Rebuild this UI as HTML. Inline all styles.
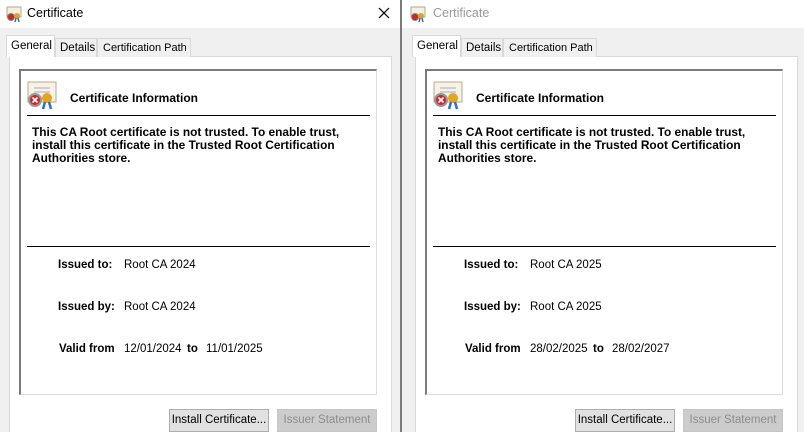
<!DOCTYPE html>
<html><head><meta charset="utf-8"><style>
*{margin:0;padding:0;box-sizing:border-box}
body{width:804px;height:432px;overflow:hidden;background:#f0f0f0;font-family:"Liberation Sans",sans-serif;font-size:11.5px;color:#000;position:relative}
.w{position:absolute;top:0;width:400px;height:432px;background:#f0f0f0;overflow:hidden}
.a{position:absolute;white-space:nowrap}
.tb{position:absolute;left:0;top:0;width:400px;height:28px;background:#fff}
.tab{position:absolute;top:38px;height:19px;border:1px solid #d9d9d9;border-bottom:none;background:#f0f0f0;padding:3px 4px 0;font-size:11.5px;white-space:nowrap;overflow:hidden}
.panel{position:absolute;left:9px;top:56px;width:383px;height:390px;background:#fff;border:1px solid #d9d9d9}
.box{position:absolute;left:19px;top:69px;width:358px;height:326px;background:#fff;border:1px solid #dcdcdc;border-top:2px solid #7a7a7a;border-left:2px solid #7a7a7a}
.hr{position:absolute;left:27px;width:343px;height:1px;background:#000}
.b{font-weight:bold}
.btn{position:absolute;top:409px;width:100px;height:23px;border:1px solid #adadad;background:#e1e1e1;text-align:center;line-height:21px;font-size:11.5px;white-space:nowrap}
.msg{left:32px;top:126px;line-height:13px;font-size:11.9px}
.cp{font-size:11px;padding-left:5px}
</style></head><body>

<div class="w" style="left:0">
 <div class="tb"></div>
 <svg class="a" style="left:6px;top:6px" width="16" height="16"><rect x="1" y="1" width="14" height="10" fill="#f4efe2" stroke="#b9a98a"/><circle cx="5" cy="11" r="3.5" fill="#c8272b" stroke="#888"/><circle cx="11" cy="10" r="3" fill="#e0a41a"/><path d="M10 12 l-1 4 M12 12 l1 4" stroke="#2f6fd0" stroke-width="1.5"/></svg>
 <div class="a" style="left:27px;top:6px;font-size:12.5px">Certificate</div>
 <svg class="a" style="left:378px;top:7px" width="12" height="12"><path d="M1 1L11 11M11 1L1 11" stroke="#000" stroke-width="1.2"/></svg>
 <div class="panel"></div>
 <div class="tab" style="left:6px;top:35px;height:22px;width:49px;background:#fff;padding-top:4px">General</div>
 <div class="tab" style="left:55px;width:42px">Details</div>
 <div class="tab cp" style="left:97px;width:94px">Certification Path</div>
 <div class="box"></div>
 <svg class="a" style="left:26px;top:80px" width="34" height="30"><rect x="2" y="2" width="28" height="20" fill="#f6f2e6" stroke="#b8ab8c"/><path d="M8 8h16M8 12h16" stroke="#aab" stroke-width="1"/><circle cx="9" cy="20" r="6" fill="#c9292d" stroke="#999" stroke-width="2"/><path d="M6.5 17.5l5 5M11.5 17.5l-5 5" stroke="#fff" stroke-width="1.6"/><circle cx="21" cy="18" r="5" fill="#e2a51b"/><path d="M19 22l-2 7M23 22l2 7" stroke="#2f6fd0" stroke-width="2.5"/></svg>
 <div class="a b" style="left:70px;top:91px;font-size:12px">Certificate Information</div>
 <div class="hr" style="top:115px"></div>
 <div class="a b msg">This CA Root certificate is not trusted. To enable trust,<br>install this certificate in the Trusted Root Certification<br>Authorities store.</div>
 <div class="hr" style="top:246px"></div>
 <div class="a b" style="left:58px;top:259px">Issued to:</div><div class="a" style="left:124px;top:259px">Root CA 2024</div>
 <div class="a b" style="left:58px;top:301px">Issued by:</div><div class="a" style="left:124px;top:301px">Root CA 2024</div>
 <div class="a b" style="left:59px;top:343px">Valid from</div><div class="a" style="left:124px;top:343px">12/01/2024</div><div class="a b" style="left:187px;top:343px">to</div><div class="a" style="left:206px;top:343px">11/01/2025</div>
 <div class="btn" style="left:169px">Install Certificate...</div>
 <div class="btn" style="left:277px;color:#8d8d8d;border-color:#c5c5c5;background:#cccccc">Issuer Statement</div>
</div>

<div class="a" style="left:400px;top:0;width:2px;height:432px;background:#7b7b7b"></div>

<div class="w" style="left:402px;width:402px">
 <div class="tb" style="left:-2px;width:404px"></div>
 <svg class="a" style="left:8px;top:6px" width="16" height="16"><rect x="1" y="1" width="14" height="10" fill="#f4efe2" stroke="#b9a98a"/><circle cx="5" cy="11" r="3.5" fill="#c8272b" stroke="#888"/><circle cx="11" cy="10" r="3" fill="#e0a41a"/><path d="M10 12 l-1 4 M12 12 l1 4" stroke="#2f6fd0" stroke-width="1.5"/></svg>
 <div class="a" style="left:31px;top:6px;font-size:12.5px;color:#999">Certificate</div>
 <div class="panel" style="left:13px"></div>
 <div class="tab" style="left:10px;top:35px;height:22px;width:49px;background:#fff;padding-top:4px">General</div>
 <div class="tab" style="left:59px;width:42px">Details</div>
 <div class="tab cp" style="left:101px;width:94px">Certification Path</div>
 <div class="box" style="left:23px"></div>
 <svg class="a" style="left:30px;top:80px" width="34" height="30"><rect x="2" y="2" width="28" height="20" fill="#f6f2e6" stroke="#b8ab8c"/><path d="M8 8h16M8 12h16" stroke="#aab" stroke-width="1"/><circle cx="9" cy="20" r="6" fill="#c9292d" stroke="#999" stroke-width="2"/><path d="M6.5 17.5l5 5M11.5 17.5l-5 5" stroke="#fff" stroke-width="1.6"/><circle cx="21" cy="18" r="5" fill="#e2a51b"/><path d="M19 22l-2 7M23 22l2 7" stroke="#2f6fd0" stroke-width="2.5"/></svg>
 <div class="a b" style="left:74px;top:91px;font-size:12px">Certificate Information</div>
 <div class="hr" style="top:115px;left:31px"></div>
 <div class="a b msg" style="left:36px">This CA Root certificate is not trusted. To enable trust,<br>install this certificate in the Trusted Root Certification<br>Authorities store.</div>
 <div class="hr" style="top:246px;left:31px"></div>
 <div class="a b" style="left:62px;top:259px">Issued to:</div><div class="a" style="left:128px;top:259px">Root CA 2025</div>
 <div class="a b" style="left:62px;top:301px">Issued by:</div><div class="a" style="left:128px;top:301px">Root CA 2025</div>
 <div class="a b" style="left:63px;top:343px">Valid from</div><div class="a" style="left:128px;top:343px">28/02/2025</div><div class="a b" style="left:191px;top:343px">to</div><div class="a" style="left:210px;top:343px">28/02/2027</div>
 <div class="btn" style="left:173px">Install Certificate...</div>
 <div class="btn" style="left:281px;color:#8d8d8d;border-color:#c5c5c5;background:#cccccc">Issuer Statement</div>
</div>
</body></html>
